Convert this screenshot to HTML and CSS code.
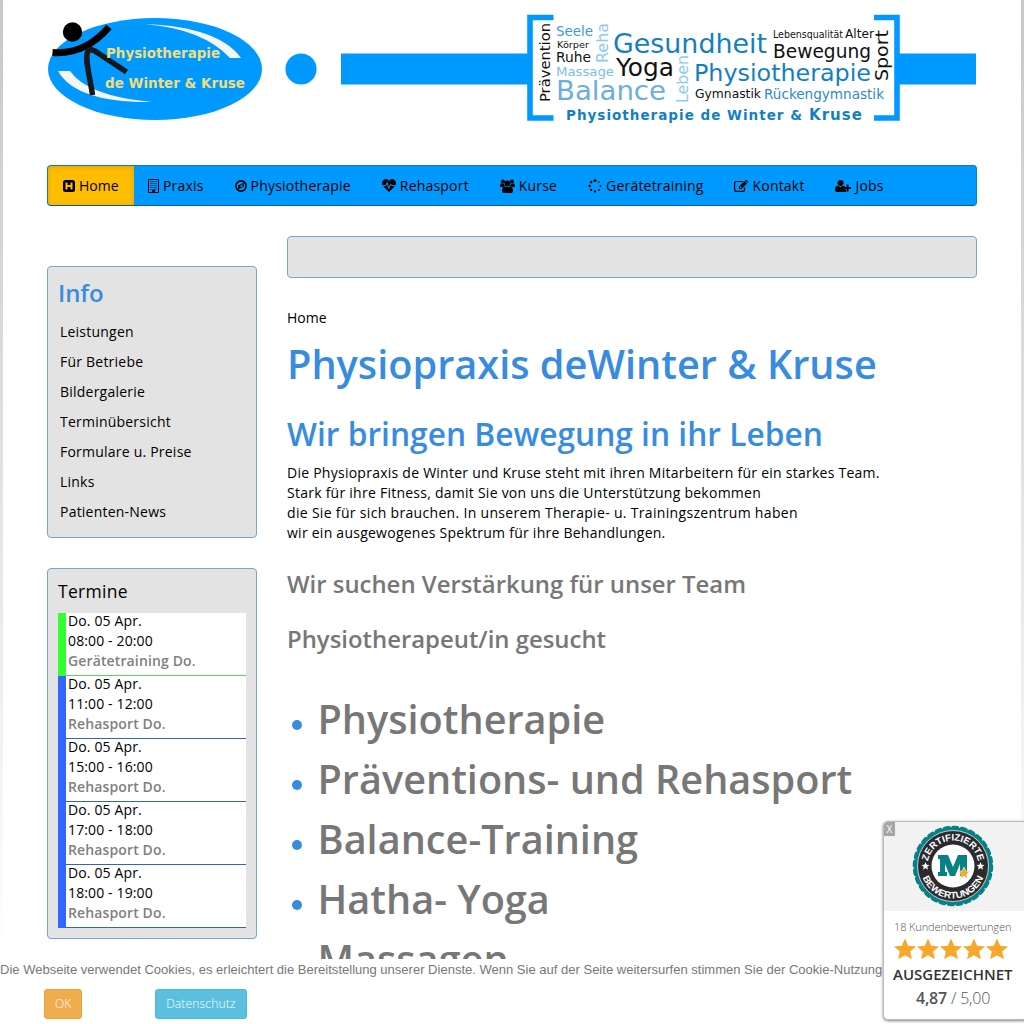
FILE: index.html
```html
<!DOCTYPE html>
<html lang="de">
<head>
<meta charset="utf-8">
<title>Physiopraxis deWinter &amp; Kruse</title>
<link rel="stylesheet" href="styles.css">
</head>
<body>
<div class="page">
  <header class="banner">
    <svg width="930" height="115" viewBox="47 10 930 115">
      <ellipse cx="155" cy="69" rx="107" ry="51" fill="#09f"/>
      <path d="M145 24Q219 27 241 58L230 58Q203 29 145 24Z" fill="#f5f5f8"/>
      <path d="M58 71L70 71Q87 96 152 102Q76 103 58 71Z" fill="#f5f5f8"/>
      <circle cx="72.500" cy="32" r="9.700"/>
      <path d="M52.500 52.500Q85 55 109 27" fill="none" stroke="#000" stroke-width="7"/>
      <path d="M92.500 95C90 76 84 58 88 51Q91 48 98 53L126.500 72" fill="none" stroke="#15181c" stroke-width="5.500"/>
      <g class="logo-text">
        <text x="106" y="58" textLength="114" lengthAdjust="spacingAndGlyphs">Physiotherapie</text>
        <text x="105" y="87.500" textLength="140" lengthAdjust="spacingAndGlyphs">de Winter &amp; Kruse</text>
      </g>
      <circle cx="301" cy="69" r="15.600" fill="#09f"/>
      <path d="M341 53.500H528V84.500H341ZM899 53.500H976V84.500H899Z" fill="#09f"/>
      <path d="M553.500 17.500H530V118H553.500M874 17.500H897V118H874" fill="none" stroke="#09f" stroke-width="5.600"/>
      <g class="cloud">
        <text transform="translate(549.500 102) rotate(-90)" font-size="14" textLength="79" lengthAdjust="spacingAndGlyphs">Prävention</text>
        <text x="556" y="36" font-size="13.500" fill="#3d9be0" textLength="37" lengthAdjust="spacingAndGlyphs">Seele</text>
        <text x="557" y="47.500" font-size="9.500" textLength="32" lengthAdjust="spacingAndGlyphs">Körper</text>
        <text x="556" y="62" font-size="13.500" textLength="35" lengthAdjust="spacingAndGlyphs">Ruhe</text>
        <text x="556" y="76" font-size="13" fill="#7dbdec" textLength="58" lengthAdjust="spacingAndGlyphs">Massage</text>
        <text transform="translate(608 63) rotate(-90)" font-size="15.500" fill="#8bc9f2" textLength="40" lengthAdjust="spacingAndGlyphs">Reha</text>
        <text x="556" y="100" font-size="27" fill="#6aafdd" textLength="110" lengthAdjust="spacingAndGlyphs">Balance</text>
        <text x="613" y="53" font-size="27" fill="#137fc2" textLength="154" lengthAdjust="spacingAndGlyphs">Gesundheit</text>
        <text x="616" y="76" font-size="24" textLength="58" lengthAdjust="spacingAndGlyphs">Yoga</text>
        <text transform="translate(687.500 103) rotate(-90)" font-size="15.500" fill="#8bcdf5" textLength="48" lengthAdjust="spacingAndGlyphs">Leben</text>
        <text x="694" y="81" font-size="23.500" fill="#137fc2" textLength="177" lengthAdjust="spacingAndGlyphs">Physiotherapie</text>
        <text x="695" y="98" font-size="12.500" textLength="66" lengthAdjust="spacingAndGlyphs">Gymnastik</text>
        <text x="764" y="98.500" font-size="13.500" fill="#2b8bc9" textLength="120" lengthAdjust="spacingAndGlyphs">Rückengymnastik</text>
        <text x="773" y="37.500" font-size="9.800" textLength="70" lengthAdjust="spacingAndGlyphs">Lebensqualität</text>
        <text x="845" y="37.500" font-size="12" textLength="29" lengthAdjust="spacingAndGlyphs">Alter</text>
        <text x="773" y="57.500" font-size="19" textLength="98" lengthAdjust="spacingAndGlyphs">Bewegung</text>
        <text transform="translate(888 81) rotate(-90)" font-size="17.500" textLength="51" lengthAdjust="spacingAndGlyphs">Sport</text>
        <text x="566" y="120" font-size="13.500" font-weight="bold" fill="#137fc2" textLength="236">Physiotherapie de Winter &amp;</text>
        <text x="809" y="120" font-size="15" font-weight="bold" fill="#137fc2" textLength="53">Kruse</text>
      </g>
    </svg>
  </header>

  <nav class="nav">
    <a class="item active"><svg width="12" height="12" viewBox="0 0 12 12"><path fill-rule="evenodd" d="M2.500 0H9.500Q12 0 12 2.500V9.500Q12 12 9.500 12H2.500Q0 12 0 9.500V2.500Q0 0 2.500 0ZM2.500 2.500V9.500H4.500V7H7.500V9.500H9.500V2.500H7.500V5H4.500V2.500Z"/></svg>Home</a>
    <a class="item"><svg width="11" height="14" viewBox="0 0 11 14"><path d="M.5.500H10.500V13.500H.5Z" fill="none" stroke="#000"/><path d="M2.500 2.500H9M2.500 4.500H9M2.500 6.500H9M2.500 8.500H9M2.500 10.500H9" stroke="#000" stroke-dasharray="1 1"/><path d="M4 11H7V14H4Z"/></svg>Praxis</a>
    <a class="item"><svg width="12" height="12" viewBox="0 0 12 12"><circle cx="6" cy="6" r="5.100" fill="none" stroke="#000" stroke-width="1.700"/><path fill-rule="evenodd" d="M8.800 2.800V6.800L3.200 9.200V5.200ZM7.800 4.300L4.500 6L7 7.200Z"/></svg>Physiotherapie</a>
    <a class="item"><svg width="14" height="13" viewBox="0 0 14 13"><path d="M7 13L1 7C-1.500 3.500 1 0 4 0C5.500 0 6.500 1 7 2C7.500 1 8.500 0 10 0C13 0 15.500 3.500 13 7Z"/><path d="M1 6.500H4L5 3.500L6.800 9.500L8.500 5L9.200 6.500H13" fill="none" stroke="#09f"/></svg>Rehasport</a>
    <a class="item"><svg width="15" height="14" viewBox="0 0 15 14"><circle cx="3" cy="2.500" r="2"/><circle cx="12" cy="2.500" r="2"/><circle cx="7.500" cy="4.500" r="2.900"/><path d="M0 7.500C0 5 .8 4.200 1.500 4.400Q3 5.300 4.200 4.500Q4 6 4.800 7Q3.600 7 2.800 8H1Q0 8 0 7.500ZM15 7.500C15 5 14.200 4.200 13.500 4.400Q12 5.300 10.800 4.500Q11 6 10.200 7Q11.400 7 12.200 8H14Q15 8 15 7.500ZM2 12C2 9 3 7.200 4.700 7.200Q7.500 9 10.300 7.200C12 7.200 13 9 13 12Q13 14 11 14H4Q2 14 2 12Z"/></svg>Kurse</a>
    <a class="item"><svg width="14" height="14" viewBox="0 0 14 14"><circle cx="7" cy="1.600" r="1.500"/><circle cx="10.900" cy="3.100" r=".8"/><circle cx="12.400" cy="7" r=".9"/><circle cx="10.900" cy="10.900" r="1"/><circle cx="7" cy="12.400" r="1.100"/><circle cx="3.100" cy="10.900" r="1.200"/><circle cx="1.600" cy="7" r="1.200"/><circle cx="3.100" cy="3.100" r="1.300"/></svg>Gerätetraining</a>
    <a class="item"><svg width="14" height="12" viewBox="0 0 14 12"><path d="M9 1.500H2.500Q.6 1.500.6 3.500V9.500Q.6 11.400 2.500 11.400H8.500Q10.500 11.400 10.500 9.500V7.500" fill="none" stroke="#000" stroke-width="1.200"/><path fill-rule="evenodd" d="M5 6.500L10.500 1L13 3.500L7.500 9H5ZM6 6.800V8H7.200L7.600 7.500L6.500 6.300Z"/><path d="M11 .500L11.500 0Q12 -.3 12.500 0L14 1.500Q14.200 2 14 2.500L13.500 3Z"/></svg>Kontakt</a>
    <a class="item"><svg width="16" height="12" viewBox="0 0 16 12"><circle cx="5.500" cy="3" r="3"/><path d="M0 10C0 7.500 .8 5.800 2.400 5.800Q5.500 8 8.500 5.800Q9.200 5.800 9.800 6.500V9.500H11V12H2Q0 12 0 10Z"/><path d="M12.500 4.500V11.500M9 8H16" stroke="#000" stroke-width="2"/></svg>Jobs</a>
  </nav>

  <div class="columns">
    <aside class="sidebar">
      <section class="well info">
        <h3>Info</h3>
        <ul>
          <li>Leistungen</li><li>Für Betriebe</li><li>Bildergalerie</li><li>Terminübersicht</li>
          <li>Formulare u. Preise</li><li>Links</li><li>Patienten-News</li>
        </ul>
      </section>
      <section class="well dates">
        <h4>Termine</h4>
        <div class="event gym"><p>Do. 05 Apr.<br>08:00 - 20:00<br><b>Gerätetraining Do.</b></p></div>
        <div class="event"><p>Do. 05 Apr.<br>11:00 - 12:00<br><b>Rehasport Do.</b></p></div>
        <div class="event"><p>Do. 05 Apr.<br>15:00 - 16:00<br><b>Rehasport Do.</b></p></div>
        <div class="event"><p>Do. 05 Apr.<br>17:00 - 18:00<br><b>Rehasport Do.</b></p></div>
        <div class="event"><p>Do. 05 Apr.<br>18:00 - 19:00<br><b>Rehasport Do.</b></p></div>
      </section>
    </aside>
    <main class="content">
      <div class="well empty"></div>
      <div class="crumb">Home</div>
      <h1>Physiopraxis deWinter &amp; Kruse</h1>
      <h2>Wir bringen Bewegung in ihr Leben</h2>
      <p class="intro">Die Physiopraxis de Winter und Kruse steht mit ihren Mitarbeitern für ein starkes Team.<br>Stark für ihre Fitness, damit Sie von uns die Unterstützung bekommen<br><span class="wide">die Sie für sich brauchen. In unserem Therapie- u. Trainingszentrum haben</span><br>wir ein ausgewogenes Spektrum für ihre Behandlungen.</p>
      <h3>Wir suchen Verstärkung für unser Team</h3>
      <h3>Physiotherapeut/in gesucht</h3>
      <ul class="services">
        <li>Physiotherapie</li><li>Präventions- und Rehasport</li><li>Balance-Training</li><li>Hatha- Yoga</li><li>Massagen</li>
      </ul>
    </main>
  </div>
</div>

<div class="cookie">
  <p>Die Webseite verwendet Cookies, es erleichtert die Bereitstellung unserer Dienste. Wenn Sie auf der Seite weitersurfen stimmen Sie der Cookie-Nutzung</p>
  <div class="buttons"><a class="btn ok">OK</a><a class="btn privacy">Datenschutz</a></div>
</div>

<div class="rating">
  <span class="close">X</span>
  <div class="seal">
    <svg width="82" height="82" viewBox="-41 -41 82 82">
      <defs>
        <path id="arcTop" d="M-25.500 0A25.500 25.500 0 0 1 25.500 0"/>
        <path id="arcBottom" d="M-32.500 0A32.500 32.500 0 0 0 32.500 0"/>
      </defs>
      <circle r="38.500" fill="#078086"/>
      <circle r="38" fill="none" stroke="#078086" stroke-width="4.500" stroke-linecap="round" stroke-dasharray="4 4.527"/>
      <circle r="35.500" fill="#2c2a2e" stroke="#e7f1f1" stroke-width=".8"/>
      <circle r="21.500" fill="#fff"/>
      <g class="seal-text">
        <text><textPath href="#arcTop" startOffset="50%" text-anchor="middle" textLength="70" lengthAdjust="spacingAndGlyphs">ZERTIFIZIERTE</textPath></text>
        <text><textPath href="#arcBottom" startOffset="50%" text-anchor="middle" textLength="78" lengthAdjust="spacingAndGlyphs">BEWERTUNGEN</textPath></text>
      </g>
      <path id="sealStar" d="M-27.500 -4L-26.400 -1.200L-23.500 -1L-25.700 .8L-25 3.700L-27.500 2.100L-30 3.700L-29.300 .8L-31.500 -1L-28.600 -1.200Z" fill="#fff"/>
      <use href="#sealStar" x="55"/>
      <path d="M-15 -11H-5L0 1L5 -11H14V10H7V-2L2 10H-3L-8 -2V6H-6V10H-15V6H-13V-7H-15Z" fill="#078086"/>
      <path d="M11 1L12.700 5L17 5.300L13.700 8.200L14.700 12.500L11 10.200L7.300 12.500L8.300 8.200L5 5.300L9.300 5Z" fill="#f7a823" stroke="#fff" stroke-width=".6"/>
    </svg>
  </div>
  <div class="count">18 Kundenbewertungen</div>
  <svg class="stars" width="114" height="22" viewBox="0 0 114 22">
    <defs><path id="star" d="M11 .5L14.200 7.700L22 8.500L16.200 13.600L17.900 21.300L11 17.300L4.100 21.300L5.800 13.600L0 8.500L7.800 7.700Z" fill="#f9a72b"/></defs>
    <use href="#star"/><use href="#star" x="23"/><use href="#star" x="46"/><use href="#star" x="69"/><use href="#star" x="92"/>
  </svg>
  <div class="grade">AUSGEZEICHNET</div>
  <div class="score"><b>4,87</b> / 5,00</div>
</div>
</body>
</html>
```
FILE: styles.css
```css
* { box-sizing: border-box; }
body {
  margin: 0;
  height: 1024px;
  overflow: hidden;
  background: linear-gradient(#c8c8c8, #dadada 340px, #fff 960px);
  font: 14px/20px "Open Sans", sans-serif;
  color: #000;
}
h1, h2, h3, h4, p, ul { margin: 0; padding: 0; font-weight: 600; }
p { font-weight: 400; }
ul { list-style: none; font-weight: 400; }
.page {
  width: 1018px;
  height: 959px;
  margin-left: 3px;
  padding: 10px 44px 0;
  background: #fff;
  overflow: hidden;
}
.banner { height: 155px; }
.banner svg { display: block; }
.logo-text { font: bold 13.500px "DejaVu Sans", sans-serif; fill: #f3dd79; }
.cloud { font-family: "DejaVu Sans", sans-serif; fill: #111; }
.nav {
  display: flex;
  height: 41px;
  background: #09f;
  border: 1px solid #0a7cc8;
  border-bottom-color: #07609c;
  border-radius: 4px;
  overflow: hidden;
  letter-spacing: .2px;
}
.item { display: flex; align-items: center; gap: 4px; padding: 0 15px; white-space: nowrap; }
.item svg { flex: none; }
.item + .item { margin-right: .9px; }
.active + .item { padding-left: 14px; }
.active { width: 86px; background: #ffbd00; box-shadow: inset 0 1px 4px rgba(0, 0, 0, .15); letter-spacing: 0; }
.columns { display: flex; gap: 30px; padding-top: 30px; }
.sidebar { width: 210px; padding-top: 30px; flex: none; }
.content { width: 690px; }
.well { background: #e3e3e3; border: 1px solid #72a9d0; border-radius: 4px; }
.info { height: 272px; padding: 6px 10px; margin-bottom: 30px; }
.info h3 { font-size: 24px; line-height: 40px; color: #388ce0; font-weight: 600; letter-spacing: -.1px; }
.info ul { padding: 4px 2px; letter-spacing: .22px; }
.info li { line-height: 30px; }
.dates { height: 371px; padding: 12px 10px; }
.dates h4 { font-size: 17.500px; line-height: 20px; font-weight: 400; margin-bottom: 12px; letter-spacing: .3px; }
.event { height: 63px; background: #fff; border-left: 8px solid #36f; }
.event p {
  display: flow-root;
  height: 63px;
  padding: 0 2px;
  border-bottom: 1px solid #36b;
  line-height: 20px;
  letter-spacing: .13px;
}
.event p::before { content: ""; display: block; margin-top: -2px; }
.event b { font-weight: 600; color: #808080; }
.gym { border-color: #3f3; }
.event.gym p { border-bottom-color: #5d5; }
.empty { height: 42px; margin-bottom: 30px; }
.crumb { margin-bottom: 16px; }
h1, h2 { color: #388ce0; line-height: 40px; font-weight: 600; white-space: nowrap; }
h1 { font-size: 39.700px; margin-bottom: 30px; }
h2 { font-size: 31.700px; margin-bottom: 9px; }
.intro { margin-bottom: 21px; letter-spacing: .25px; white-space: nowrap; }
.wide { letter-spacing: .32px; }
.content h3 { color: #777; font-size: 23.900px; line-height: 40px; margin-bottom: 15px; }
.services { padding-top: 15px; }
.services li {
  display: flex;
  align-items: center;
  height: 60px;
  color: #777;
  font-size: 39.650px;
  line-height: 40px;
  font-weight: 600;
  white-space: nowrap;
}
.services li::before { content: ""; width: 10px; height: 10px; margin: 12px 15.500px 0 5px; border-radius: 50%; background: #388ce0; }
.cookie {
  position: absolute;
  left: 0;
  top: 959px;
  width: 1024px;
  height: 65px;
  background: #fff;
  color: #777;
}
.cookie p { padding-top: 1px; font: 13px/20px "Liberation Sans", sans-serif; letter-spacing: .008px; white-space: nowrap; }
.buttons { display: flex; gap: 73px; padding: 9px 44px; }
.btn { height: 30px; padding: 0 10px; border: 1px solid #eea236; border-radius: 3px; background: #f0ad4e; color: #fff; font-size: 12px; line-height: 28px; font-weight: 300; }
.privacy { background: #5bc0de; border-color: #46b8da; letter-spacing: .18px; }
.rating {
  position: absolute;
  left: 883px;
  top: 821px;
  width: 145px;
  height: 199px;
  background: #fff;
  border: 1px solid #bbb;
  border-radius: 5px;
  box-shadow: 0 1px 3px rgba(0, 0, 0, .5);
  overflow: hidden;
  color: #555;
  white-space: nowrap;
}
.close { position: absolute; left: 0; top: 0; width: 11px; height: 14px; background: #a5a5a5; color: #fff; font-size: 10px; line-height: 14px; text-align: center; }
.seal { height: 89px; padding: 3px 0 0 28px; background: #f2f2f2; }
.seal svg, .stars { display: block; }
.seal-text { font: bold 9.500px "Liberation Sans", sans-serif; fill: #fff; }
.count { padding: 6px 0 0 10px; font-size: 11px; line-height: 20px; font-weight: 300; letter-spacing: -.12px; }
.stars { margin: 1px 0 0 10px; }
.grade { padding-left: 9px; margin-top: 2px; color: #333; font-size: 15px; line-height: 24px; font-weight: 600; }
.score { padding-left: 32px; font-size: 16px; line-height: 24px; font-weight: 300; letter-spacing: -.2px; }
.score b { font-weight: 600; }
```
